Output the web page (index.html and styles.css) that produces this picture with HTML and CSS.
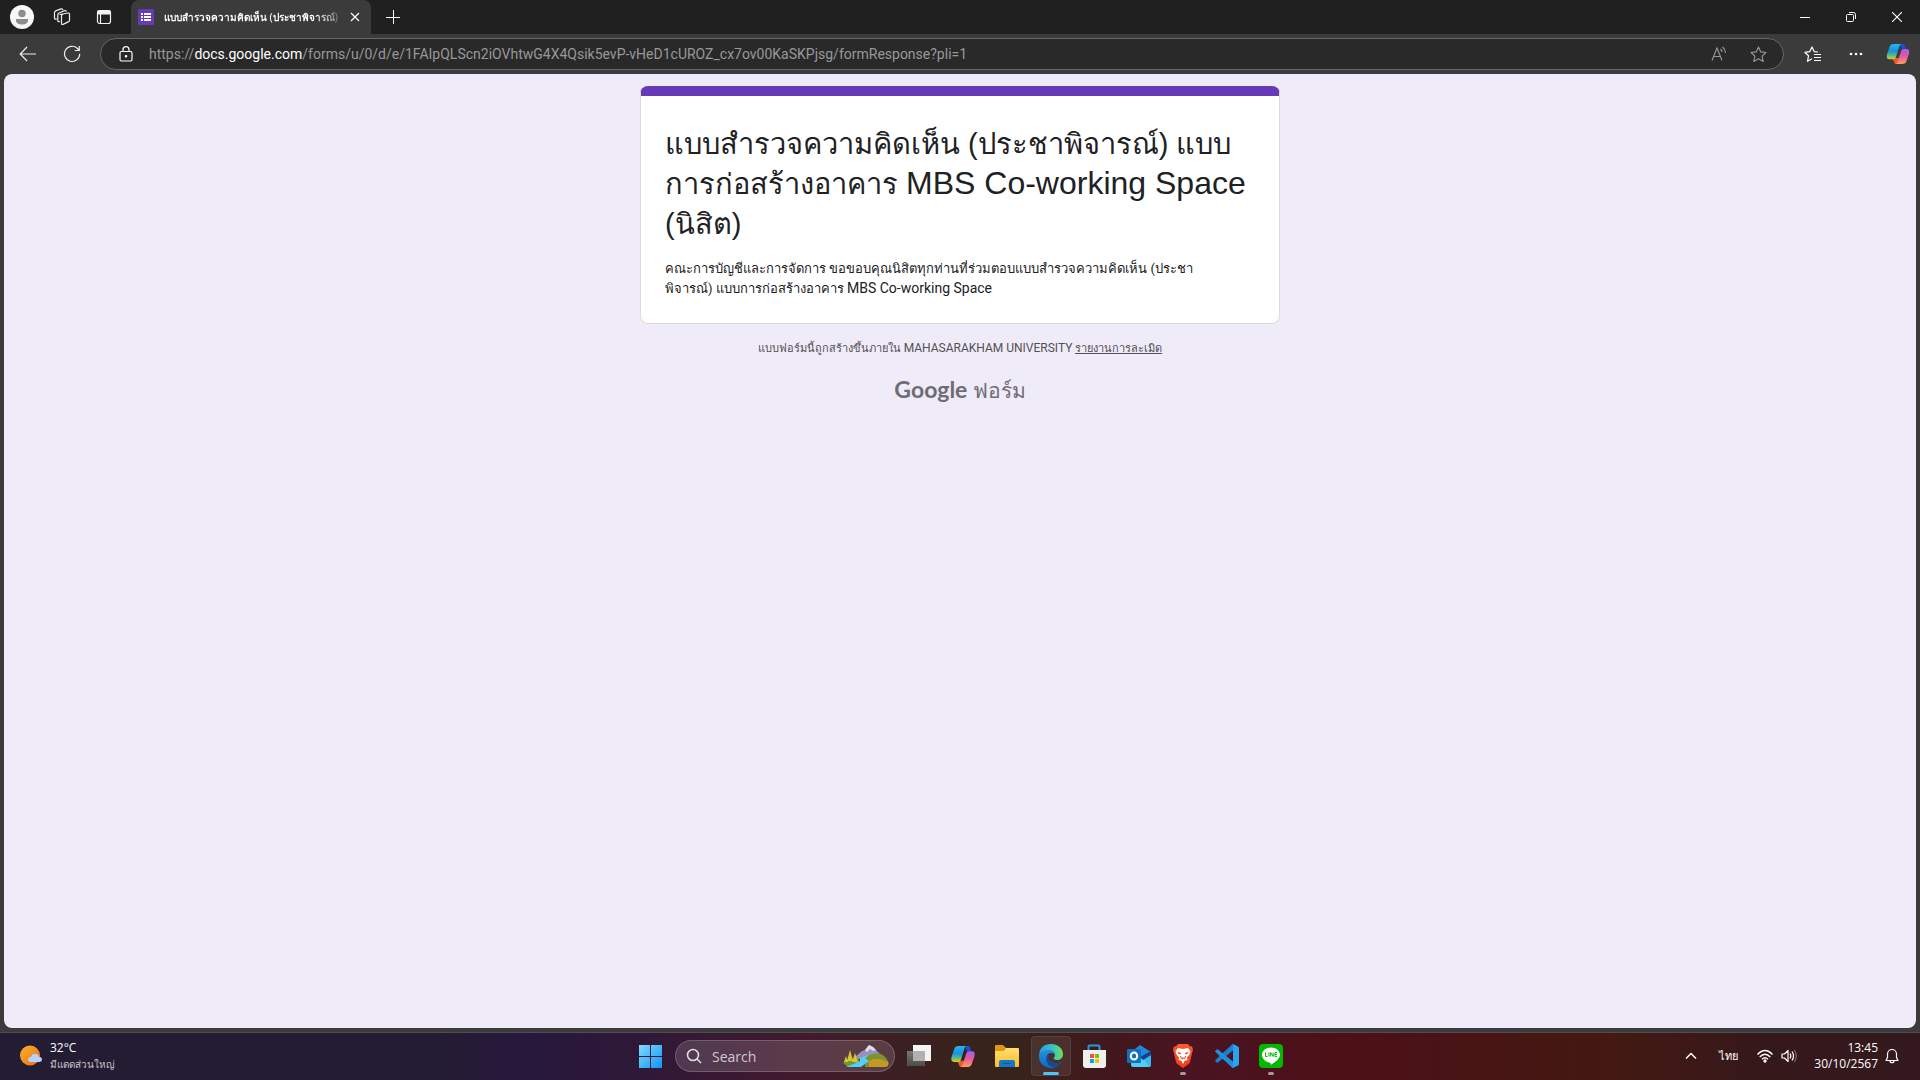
FILE: index.html
```html
<!DOCTYPE html>
<html lang="th">
<head>
<meta charset="utf-8">
<meta name="viewport" content="width=device-width, initial-scale=1">
<title>แบบสำรวจความคิดเห็น (ประชาพิจารณ์)</title>
<link rel="stylesheet" href="styles.css">
</head>
<body>
<svg class="defs" aria-hidden="true">
  <defs>
    <linearGradient id="cpA" x1="0" y1="0" x2="0" y2="1"><stop offset="0" stop-color="#22b8f5"/><stop offset=".45" stop-color="#1a8fe0"/><stop offset=".75" stop-color="#4dc08a"/><stop offset="1" stop-color="#f5c518"/></linearGradient>
    <linearGradient id="cpB" x1="0" y1="0" x2="0" y2="1"><stop offset="0" stop-color="#a35df2"/><stop offset=".45" stop-color="#e2569f"/><stop offset="1" stop-color="#ff9a5c"/></linearGradient>
    <symbol id="copilot" viewBox="0 0 24 24">
      <path d="M14 2h3c1 0 1.600.6 2 2l.8 3h-4z" fill="#1b4fd0"/>
      <path d="M6.500 16l2 5c.4.800 1 1 2 1h3l2-6z" fill="#f2562b"/>
      <path d="M7.500 2h8c-1.500.5-2 1.500-2.500 3.500l-3 9.500c-.5 1.600-1.300 2.200-3 2.200H3.500C1 17.200.3 15.500 1 12.500L3.500 5C4.200 2.800 5.500 2 7.500 2z" fill="url(#cpA)"/>
      <path d="M16.500 22h-7c1.500-.3 2-1.500 2.500-3.500l3-9c.5-1.800 1.300-2.500 3-2.500h2.500c2.500 0 3.200 1.700 2.500 4.700L20.500 19c-.7 2.200-2 3-4 3z" fill="url(#cpB)"/>
    </symbol>
    <linearGradient id="win" x1="0" y1="0" x2="1" y2="1"><stop offset="0" stop-color="#7fdcff"/><stop offset="1" stop-color="#0f94f5"/></linearGradient>
    <linearGradient id="sun" x1="0" y1="0" x2="1" y2="1"><stop offset="0" stop-color="#f7b52c"/><stop offset="1" stop-color="#f26a1b"/></linearGradient>
    <linearGradient id="folder" x1="0" y1="0" x2="0" y2="1"><stop offset="0" stop-color="#ffdf70"/><stop offset="1" stop-color="#fbbd2c"/></linearGradient>
    <linearGradient id="edgeA" x1="0" y1="0" x2="1" y2="0"><stop offset="0" stop-color="#249de0"/><stop offset=".55" stop-color="#35c1c8"/><stop offset="1" stop-color="#6fdd5a"/></linearGradient>
    <linearGradient id="edgeB" x1="0" y1="0" x2="0" y2="1"><stop offset="0" stop-color="#2390dc"/><stop offset="1" stop-color="#1268c0"/></linearGradient>
    <linearGradient id="brave" x1="0" y1="0" x2="0" y2="1"><stop offset="0" stop-color="#ff5a2b"/><stop offset="1" stop-color="#f53a18"/></linearGradient>
    <linearGradient id="grey" x1="0" y1="0" x2="0" y2="1"><stop offset="0" stop-color="#777"/><stop offset="1" stop-color="#4c4c4c"/></linearGradient>
  </defs>
</svg>
<div class="desktop">
  <header class="tabs">
    <button class="profile" aria-label="Profile"><svg width="24" height="24" viewBox="0 0 24 24"><circle cx="12" cy="12" r="12" fill="#f7f7f7"/><circle cx="12" cy="8.500" r="3.700" fill="#8d8d8d"/><path d="M6 14h12v1.500c0 2.500-2.700 4-6 4s-6-1.500-6-4z" fill="#8d8d8d"/></svg></button>
    <button class="top-btn" aria-label="Workspaces"><svg width="18" height="18" viewBox="0 0 18 18" fill="none" stroke="#eee" stroke-width="1.200"><path d="M7 6.500l8-1.500q1.500-.2 1.500 1.200v6q0 1.200-1.200 1.700l-5.300 2.500q-1.500.5-1.500-1V8q0-1.200 1-1.500z" stroke-linejoin="round"/><path d="M6.500 13.500q-1.700.5-1.700-1V7q0-1.500 1.200-2l5.500-2.400q1.300-.4 1.700.7M3.500 11q-2 .7-2-1V4.800q0-1.400 1.200-1.900L8 .9q1.300-.4 1.700.7" stroke-linecap="round"/></svg></button>
    <button class="top-btn" aria-label="Tab actions"><svg width="16" height="16" viewBox="0 0 16 16" fill="none" stroke="#f3f3f3" stroke-width="1.200"><rect x="1.500" y="1.500" width="13" height="13" rx="2.200"/><path d="M2 2h12v3H2z" fill="#f3f3f3"/><path d="M4.500 5v9"/></svg></button>
    <div class="tab">
      <svg width="16" height="16" viewBox="0 0 16 16"><rect width="16" height="16" rx="1" fill="#673ab7"/><path d="M3 4h2v2H3zM3 7h2v2H3zM3 10h2v2H3zM6 4h7v2H6zM6 7h7v2H6zM6 10h7v2H6z" fill="#fff"/></svg>
      <span class="tab-title">แบบสำรวจความคิดเห็น (ประชาพิจารณ์)</span>
      <button class="tab-close" aria-label="Close tab"><svg width="10" height="10" viewBox="0 0 10 10" stroke="#fff" stroke-width="1.200"><path d="M1 1l8 8M9 1L1 9"/></svg></button>
    </div>
    <button class="new-tab" aria-label="New tab"><svg width="14" height="14" viewBox="0 0 14 14" stroke="#fff"><path d="M7.500 0v14M0 7.500h14"/></svg></button>
    <div class="window-btns">
      <button aria-label="Minimize"><svg width="10" height="10" viewBox="0 0 10 10" stroke="#fff"><path d="M0 5.500h10"/></svg></button>
      <button aria-label="Restore"><svg width="10" height="10" viewBox="0 0 10 10" fill="none" stroke="#fff"><rect x=".5" y="2.500" width="7" height="7" rx="1"/><path d="M3 .5h4.500q2 0 2 2V7"/></svg></button>
      <button aria-label="Close"><svg width="10" height="10" viewBox="0 0 10 10" stroke="#fff" stroke-width="1.100"><path d="M0 0l10 10M10 0L0 10"/></svg></button>
    </div>
  </header>
  <nav class="toolbar">
    <button class="nav-btn" aria-label="Back"><svg width="18" height="16" viewBox="0 0 18 16" fill="none" stroke="#eee" stroke-width="1.200"><path d="M17 8H1.500M8 1L1.200 8 8 15"/></svg></button>
    <button class="nav-btn" aria-label="Refresh"><svg width="18" height="18" viewBox="0 0 18 18" fill="none" stroke="#eee" stroke-width="1.200"><path d="M16.700 8.700A7.600 7.600 0 1 1 14.500 3.500L16 5M16.300 1v4.500h-4.500"/></svg></button>
    <div class="address">
      <svg width="14" height="16" viewBox="0 0 14 16" fill="none" stroke="#fff" stroke-width="1.200"><rect x="1" y="5.500" width="12" height="9.500" rx="1.500"/><path d="M4 5.500V3.700a3 3 0 0 1 6 0v1.800"/><circle cx="7" cy="10.300" r=".7" fill="#fff"/></svg>
      <a class="url" href="#form">https://<b>docs.google.com</b>/forms/u/0/d/e/1FAIpQLScn2iOVhtwG4X4Qsik5evP-vHeD1cUROZ_cx7ov00KaSKPjsg/formResponse?pli=1</a>
      <button aria-label="Read aloud"><svg width="16" height="16" viewBox="0 0 16 16" fill="none" stroke="#999" stroke-width="1.100"><path d="M1 14.500L6 2l5 12.500M2.800 10.500h6.400M9.500 3q1.300 1.200 1.500 3M11.500 1q2.700 2 3 6"/></svg></button>
      <button aria-label="Favorite"><svg width="17" height="17" viewBox="0 0 17 17" fill="none" stroke="#999" stroke-width="1.100" stroke-linejoin="round"><path d="M8.500 1l2.300 4.900 5.200.6-3.900 3.600 1.100 5.400-4.700-2.700-4.700 2.700 1.100-5.400L1 6.500l5.200-.6z"/></svg></button>
    </div>
    <button class="side-btn" aria-label="Favorites"><svg width="17" height="17" viewBox="0 0 17 17" fill="none" stroke="#fff" stroke-width="1.200" stroke-linejoin="round"><path d="M14 6l-3.700-.3L8 1 5.700 5.700.8 6.300l3.700 3.500-1 5.500L8 12.800"/><path d="M10 8.500h7M10 11.500h7M10 14.500h7"/></svg></button>
    <button class="side-btn" aria-label="Settings and more"><svg width="14" height="4" viewBox="0 0 14 4" fill="#fff"><circle cx="2" cy="2" r="1.300"/><circle cx="7" cy="2" r="1.300"/><circle cx="12" cy="2" r="1.300"/></svg></button>
    <button class="side-btn copilot" aria-label="Copilot"><svg width="24" height="24"><use href="#copilot"/></svg></button>
  </nav>
  <main class="page" id="form">
    <section class="card">
      <h1>แบบสำรวจความคิดเห็น (ประชาพิจารณ์) แบบ<wbr>การก่อสร้างอาคาร <span lang="en">MBS Co-working Space</span> (นิสิต)</h1>
      <p class="intro">คณะการบัญชีและการจัดการ ขอขอบคุณนิสิตทุกท่านที่ร่วมตอบแบบสำรวจความคิดเห็น (ประชา<wbr>พิจารณ์) แบบการก่อสร้างอาคาร <span lang="en">MBS Co-working Space</span></p>
    </section>
    <p class="notice">แบบฟอร์มนี้ถูกสร้างขึ้นภายใน <span lang="en">MAHASARAKHAM UNIVERSITY</span> <a href="#report">รายงานการละเมิด</a></p>
    <a class="logo" href="#forms"><span lang="en">Google</span> ฟอร์ม</a>
  </main>
  <footer class="taskbar">
    <button class="weather">
      <svg width="24" height="22" viewBox="0 0 24 22"><circle cx="10" cy="10.500" r="10" fill="url(#sun)"/><path d="M11 17q-3 0-3-2.500T11 12q.8-3.200 4-3.200 3 0 4 3 3 .4 3 2.700T19.500 17z" fill="#b7d2fa"/></svg>
      <span class="weather-text"><span>32°C</span><span class="sub">มีแดดส่วนใหญ่</span></span>
    </button>
    <div class="apps">
      <button class="app" aria-label="Start"><svg width="24" height="24" viewBox="0 0 24 24" fill="url(#win)"><path d="M0 1h11v11H0zM12 1h11v11H12zM0 13h11v11H0zM12 13h11v11H12z"/></svg></button>
      <label class="search">
        <svg width="16" height="16" viewBox="0 0 16 16" fill="none" stroke="#ddd" stroke-width="1.600"><circle cx="7" cy="7" r="5.500"/><path d="M11 11l4 4"/></svg>
        <input type="text" placeholder="Search" aria-label="Search">
        <svg width="46" height="24" viewBox="0 0 46 24"><path d="M12 13l7-6 3-1 4-5 4 2 8 8-4 4H14z" fill="#9791bd"/><path d="M22 6l4-5 4 2 3 3-3 1-3-2-3 3z" fill="#dedcf0"/><path d="M22 14q7-6 16-4 6 3 8 10l-3 3H22z" fill="#7c9430"/><path d="M26 17q8-5 19 1v4l-3 1H26z" fill="#c09a25"/><path d="M0 19q6-6 15-5l3 9H5z" fill="#6b9a30"/><path d="M7 6l3 11H4zM12 9l3 9H9zM3 12l2 6H1z" fill="#d8c630"/><path d="M26 11l-4 3 4 3-8 6H3q8-3 14-6-2-4 9-6z" fill="#55cdf5"/></svg>
      </label>
      <button class="app" aria-label="Task view"><svg width="24" height="24" viewBox="0 0 24 24"><path d="M6 1h18v16H6z" fill="#f4f4f4"/><path d="M0 7h18v15H0z" fill="url(#grey)"/><path d="M6 7h12v10H6z" fill="#b3b0b0"/></svg></button>
      <button class="app" aria-label="Copilot"><svg width="26" height="25"><use href="#copilot"/></svg></button>
      <button class="app" aria-label="File Explorer"><svg width="24" height="24" viewBox="0 0 24 24"><path d="M0 2q0-1 1-1h7l3 3v5H0z" fill="#dc9a12"/><path d="M0 7h9l2-3h12q1 0 1 1v17q0 1-1 1H1q-1 0-1-1z" fill="url(#folder)"/><path d="M4 23v-5q0-2 2-2h12q2 0 2 2v5z" fill="#1678c9"/><path d="M8 19.500h8" stroke="#0a559c"/></svg></button>
      <button class="app active" aria-label="Microsoft Edge"><svg width="26" height="26" viewBox="0 0 26 26"><path d="M1 12Q2 1 13 1c7 0 12 4.500 12 10 0 4-2.700 6-6 6-2 0-3.500-.7-3.500-1.700S17 14 17 12c0-2.500-2.500-4.500-6-4.500-5 0-8.500 2-10 4.500z" fill="url(#edgeA)"/><path d="M1 12.500C2 9 5.500 7 10 7c4 0 7 2.300 7 5-1-1.500-2.200-2-3.600-2-3 0-4.900 2-4.900 5.500 0 5 4 9 9 8.500-1.500.8-3 1-4.500 1C6 25 .6 20 1 12.500z" fill="url(#edgeB)"/><path d="M11 11c-1.500 1-2.500 2.600-2.500 5 0 5 4 8.800 9 8 2.500-.8 4.500-2.300 5.800-4.400.3-.6-.2-.9-.7-.6-5 2.500-12 0-12.100-5 0-1.200.1-2 .5-3z" fill="#114d94"/></svg></button>
      <button class="app" aria-label="Microsoft Store"><svg width="24" height="24" viewBox="1 0 24 24"><path d="M6.500 7V2.500Q6.500 1.500 7.500 1.500h9q1 0 1 1V7" fill="none" stroke="#1c9be6" stroke-width="2"/><path d="M1 6h23v15q0 3-3 3H4q-3 0-3-3z" fill="#efefef"/><path d="M8 10h4v4H8z" fill="#f35325"/><path d="M13 10h4v4h-4z" fill="#81bc06"/><path d="M8 15h4v4H8z" fill="#05a6f0"/><path d="M13 15h4v4h-4z" fill="#ffba08"/></svg></button>
      <button class="app" aria-label="Outlook"><svg width="24" height="24" viewBox="0 0 24 24"><path d="M4 8l9-7 11 7v6H4z" fill="#1e8ad8"/><path d="M24 8v13q0 2-2 2H6q-2 0-2-2v-4z" fill="#4fcdf3"/><path d="M24 8l-9 5 7 9q2 0 2-2z" fill="#38b8ec"/><path d="M24 7L13 13l3 3 8-5z" fill="#173f87"/><rect y="5" width="14" height="14" rx="1" fill="#1270c4"/><ellipse cx="7" cy="12" rx="3.200" ry="3.500" fill="none" stroke="#fff" stroke-width="2"/></svg></button>
      <button class="app running" aria-label="Brave"><svg width="20" height="24" viewBox="0 0 20 24"><path d="M5 0h10l2 2.500 2-.2 1 3.700-.7 2L17 18q-.5 1.500-2 2.600L10 24l-5-3.400Q3.500 19.500 3 18L.7 8 0 6l1-3.700 2 .2z" fill="url(#brave)"/><path d="M5 4l5 1 5-1 2.500 3.500-1 3-2.500 3 .5 2.500-3 1L10 20l-1.500-3-3-1 .5-2.500-2.500-3-1-3z" fill="#fff"/><path d="M5 8l3 1-.5 1.500L5 9.500zM15 8l-3 1 .5 1.500 2.500-1zM8.500 13.500h3L10 15.500z" fill="#f9421c"/><path d="M7.500 12l1 3M12.500 12l-1 3" stroke="#f9421c"/></svg></button>
      <button class="app" aria-label="Visual Studio Code"><svg width="24" height="24" viewBox="0 0 24 24"><path d="M18 0l5 2.400q1 .5 1 1.600v16q0 1.100-1 1.600L18 24z" fill="#2ba3ee"/><path d="M18 0v6.500L3 18.500q-.6.400-1.200 0L.4 17.200q-.6-.6 0-1.200L17 .5q.5-.5 1-.5z" fill="#1681cf"/><path d="M18 24v-6.500L3 5.500q-.6-.4-1.200 0L.4 6.800q-.6.600 0 1.200L17 23.500q.5.500 1 .5z" fill="#1c8fdd"/></svg></button>
      <button class="app running" aria-label="LINE"><svg width="24" height="24" viewBox="0 0 24 24"><rect width="24" height="24" rx="4" fill="#00b900"/><path d="M12 3.500c5 0 9 3.200 9 7.200 0 4-5 7.300-8.500 9.800-.8.400-1-.3-.8-1.700C7 18.500 3 15 3 10.700c0-4 4-7.200 9-7.200z" fill="#fff"/><path d="M6.500 8.500v4h2M10 8.500v4M11.700 12.500v-4l2.500 4v-4M18 8.500h-2v4h2M16 10.500h2" fill="none" stroke="#00b900"/></svg></button>
    </div>
    <div class="tray">
      <button aria-label="Show hidden icons"><svg width="12" height="8" viewBox="0 0 12 8" fill="none" stroke="#fff" stroke-width="1.500"><path d="M1 6.500l5-5 5 5"/></svg></button>
      <button class="lang">ไทย</button>
      <button class="status" aria-label="Network and volume">
        <svg width="16" height="14" viewBox="0 0 16 14" fill="none" stroke="#fff" stroke-width="1.300"><path d="M.5 5.500q7.500-8 15 0M2.700 8q5.300-5.500 10.600 0M5 10.300q3-3 6 0"/><circle cx="8" cy="12" r="1" fill="#fff"/></svg>
        <svg width="17" height="14" viewBox="0 0 17 14" fill="none" stroke="#fff" stroke-width="1.200"><path d="M1 5h2.500L7 1.500v11L3.500 9H1zM9 4.500q1.700 2.500 0 5M11 2.500q3 4.500 0 9" stroke-linejoin="round"/><path d="M13.300 1q4 6 0 12" stroke="#806a68"/></svg>
      </button>
      <button class="clock"><span>13:45</span><span>30/10/2567</span></button>
      <button aria-label="Notifications"><svg width="14" height="16" viewBox="0 0 14 16" fill="none" stroke="#fff" stroke-width="1.200" stroke-linejoin="round"><path d="M1 12.500l1.500-3V6a4.500 4.500 0 0 1 9 0v3.500l1.500 3zM5 12.700a2 2 0 0 0 4 0"/></svg></button>
    </div>
  </footer>
</div>
</body>
</html>
```
FILE: styles.css
```css
* { box-sizing: border-box; }
body { margin: 0; font-family: "Open Sans", "Noto Sans", sans-serif; color: #fff; }
button { margin: 0; padding: 0; border: 0; background: none; color: inherit; font: inherit; display: flex; align-items: center; justify-content: center; }
svg { display: block; flex: none; }
.defs { position: absolute; width: 0; height: 0; }
.desktop { min-height: 100vh; display: flex; flex-direction: column; background: #3b3b3b; }

.tabs { height: 34px; display: flex; align-items: stretch; background: #202020; }
.profile { width: 44px; }
.top-btn { width: 36px; margin-right: 6px; }
.tab { width: 240px; margin-left: 3px; padding: 0 11px 0 7px; display: flex; align-items: center; background: #3b3b3b; border-radius: 8px 8px 0 0; }
.tab-title { flex: 1; margin: 0 6px 0 10px; font-size: 10px; font-weight: 600; white-space: nowrap; color: transparent; background: linear-gradient(90deg, #fff 84%, #555 100%); -webkit-background-clip: text; background-clip: text; }
.new-tab { width: 44px; }
.window-btns { margin-left: auto; display: flex; }
.window-btns button { width: 46px; }

.toolbar { height: 40px; padding: 4px 2px 4px 6px; display: flex; align-items: center; }
.nav-btn { width: 44px; height: 32px; }
.address { flex: 1; height: 32px; margin: 0 6px; padding: 0 16px 0 18px; display: flex; align-items: center; gap: 23px; background: #292929; border: 1px solid #666; border-radius: 16px; }
.url { flex: 1; margin-left: -7px; font: 14px Roboto, sans-serif; color: #989898; text-decoration: none; white-space: nowrap; overflow: hidden; }
.url b { color: #fff; font-weight: 400; }
.side-btn { width: 44px; height: 32px; }
.copilot { width: 40px; }

.page { flex: 1; margin: 0 4px 4px; padding: 12px 16px; border-radius: 8px; background: #f0ebf8; color: #202124; display: flex; flex-direction: column; align-items: center; }
.card { width: 100%; max-width: 640px; padding: 28px 24px 24px; border: 1px solid #dadce0; border-top: 10px solid #673ab7; border-radius: 8px; background: #fff; }
h1 { margin: 0 0 15px; font: 400 29px/40px "Liberation Sans", sans-serif; }
h1 span { font-size: 32px; line-height: 32px; }
.intro { margin: 0; padding-right: 32px; font: 400 13px/20px Roboto, sans-serif; }
.intro span { font-size: 14px; line-height: 16px; }
.notice { margin: 17px 0; font: 400 11px/16px Roboto, sans-serif; color: #505055; }
.notice span { font-size: 12px; line-height: 12px; }
.notice a { color: inherit; }
.logo { color: #6f6c74; font: 400 21px/34px Roboto, sans-serif; text-decoration: none; }
.logo span { font: 700 23px/24px Lato, sans-serif; }

.taskbar { height: 48px; padding-bottom: 1px; border-top: 1px solid #514b55; display: grid; grid-template-columns: 1fr auto 1fr; background: linear-gradient(90deg, #241c32 0%, #241c32 23%, #27183c 27%, #2e1838 33%, #421a2c 42%, #38231c 50%, #38231c 53%, #42171c 58%, #4a1422 62%, #4c1016 70%, #431912 84%, #35181a 92%, #33191e 100%); }
.weather { justify-self: start; margin-left: 20px; gap: 6px; }
.weather-text { display: flex; flex-direction: column; align-items: flex-start; font-size: 12px; line-height: 16px; }
.sub { font-size: 10px; color: #c8c5cd; }
.apps { display: flex; align-items: center; padding-left: 2px; }
.app { position: relative; width: 44px; height: 40px; }
.active::before { content: ""; position: absolute; inset: 0 2px; border-radius: 4px; background: rgba(255,255,255,.08); border: 1px solid rgba(255,255,255,.07); }
.active svg { position: relative; }
.active::after, .running::after { content: ""; position: absolute; bottom: 1px; width: 6px; height: 3px; border-radius: 2px; background: #a99a9a; }
.active::after { width: 16px; background: #4cc2ff; }
.search { width: 220px; height: 32px; margin: 0 2px; padding: 0 5px 0 10px; display: flex; align-items: center; border: 1px solid rgba(255,255,255,.18); border-radius: 16px; background: rgba(255,255,255,.14); }
.search input { flex: 1; min-width: 0; margin-left: 10px; padding: 0; border: 0; outline: 0; background: none; font: 14px "Open Sans", sans-serif; color: #fff; }
.search input::placeholder { color: #d0c8ce; opacity: 1; }
.tray { justify-self: end; display: flex; align-items: stretch; padding-right: 21px; font-size: 12px; line-height: 16px; }
.lang { margin: 0 19px 0 22px; font-size: 11px; }
.status { gap: 8px; }
.clock { margin: 0 7px 0 16px; flex-direction: column; align-items: flex-end; }
```
